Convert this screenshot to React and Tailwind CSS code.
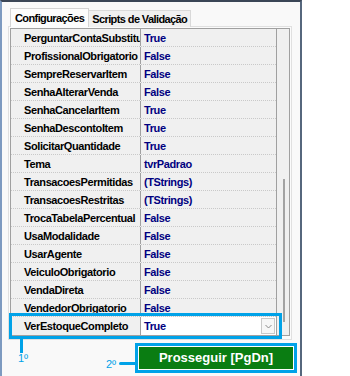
import React from "react";

const rows = [
  ["PerguntarContaSubstitu", "True"],
  ["ProfissionalObrigatorio", "False"],
  ["SempreReservarItem", "False"],
  ["SenhaAlterarVenda", "False"],
  ["SenhaCancelarItem", "True"],
  ["SenhaDescontoItem", "True"],
  ["SolicitarQuantidade", "True"],
  ["Tema", "tvrPadrao"],
  ["TransacoesPermitidas", "(TStrings)"],
  ["TransacoesRestritas", "(TStrings)"],
  ["TrocaTabelaPercentual", "False"],
  ["UsaModalidade", "False"],
  ["UsarAgente", "False"],
  ["VeiculoObrigatorio", "False"],
  ["VendaDireta", "False"],
  ["VendedorObrigatorio", "False"],
  ["VerEstoqueCompleto", "True"],
];

const Row = ({ name, value, selected }) => (
  <div
    className={`flex h-[18px] ${
      selected ? "" : "border-b border-dotted border-[#c9c9c9]"
    }`}
  >
    <div className="w-[130px] shrink-0 pl-[13px] overflow-hidden whitespace-nowrap border-r border-[#a0a0a0] text-black font-bold leading-[18px]">
      {name}
    </div>
    <div
      className={`flex-1 flex items-center pl-[3px] text-[#000080] font-bold leading-[18px] ${
        selected ? "bg-white" : ""
      }`}
    >
      <span className="flex-1">{value}</span>
      {selected && (
        <div className="w-[14px] h-[16px] mr-[1px] border border-[#c9c9c9] bg-[#f7f7f7] flex items-center justify-center">
          <svg width="7" height="5" viewBox="0 0 7 5">
            <path d="M0.5 1 L3.5 4 L6.5 1" fill="none" stroke="#8a8a8a" strokeWidth="1" />
          </svg>
        </div>
      )}
    </div>
  </div>
);

export default function App() {
  return (
    <div
      className="w-[350px] h-[376px] bg-white flex overflow-hidden"
      style={{ fontFamily: '"Liberation Sans", Arial, sans-serif' }}
    >
      <div className="relative w-[302px] h-full shrink-0 bg-[#f9f9f9] border-l-2 border-l-[#7d9ac0] border-r-2 border-r-[#56677d] border-t-2 border-t-[#3b4656] flex flex-col">
        {/* tabs */}
        <div className="flex items-end ml-[8px] mt-[6px] h-[19px] text-[11px] font-bold tracking-[-0.6px] relative z-10">
          <div className="h-[19px] px-[4px] border border-b-0 border-[#d4d4d4] bg-[#fcfcfc] flex items-center text-black">
            Configurações
          </div>
          <div className="h-[17px] px-[3px] border border-l-0 border-b-0 border-[#d9d9d9] bg-[#f0f0f0] flex items-center text-black">
            Scripts de Validação
          </div>
        </div>

        {/* tab sheet */}
        <div className="ml-[6px] mt-[-1px] w-[284px] h-[314px] border border-[#e0e0e0] bg-[#fbfbfb] p-[1px]">
          <div className="w-[280px] h-[308px] border border-[#a0a0a0] bg-[#f0f0f0] flex text-[11px] tracking-[-0.4px]">
            <div className="w-[265px] shrink-0">
              {rows.map(([n, v], i) => (
                <Row key={n} name={n} value={v} selected={i === rows.length - 1} />
              ))}
            </div>
            <div className="flex-1 border-l border-[#a0a0a0] bg-[#f0f0f0] relative">
              <div className="absolute left-[6px] top-[150px] w-[2px] h-[143px] bg-[#a3a3a3]" />
            </div>
          </div>
        </div>

        {/* button */}
        <div className="ml-[133px] mt-[3px] w-[162px] h-[30px] border-[3px] border-[#00a2e8] bg-white p-[1px]">
          <div className="w-full h-full bg-[#0a7d12] text-white font-bold text-[13px] flex items-center justify-center">
            Prosseguir [PgDn]
          </div>
        </div>

        {/* annotations */}
        <div className="absolute left-[7px] top-[311px] w-[273px] h-[26px] border-[3px] border-[#00a2e8]" />
        <div className="absolute left-[18px] top-[337px] w-[3px] h-[14px] bg-[#00a2e8]" />
        <div className="absolute left-[16px] top-[350px] text-[11px] leading-[12px] text-[#00a2e8]">
          1º
        </div>
        <div className="absolute left-[104px] top-[356px] text-[11px] leading-[12px] text-[#00a2e8]">
          2º
        </div>
        <div className="absolute left-[117px] top-[360px] w-[16px] h-[3px] bg-[#00a2e8] rounded-l-full" />
      </div>
    </div>
  );
}
